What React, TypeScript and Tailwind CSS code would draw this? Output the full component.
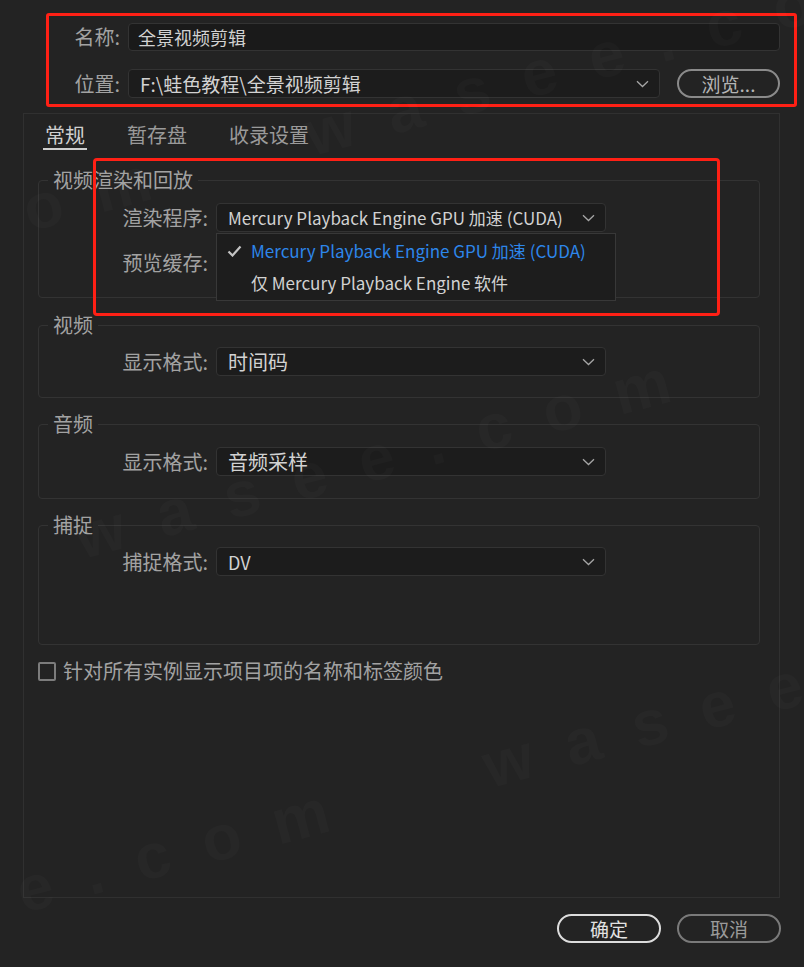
import React from "react"

const chevron = (
  <svg width="13" height="8" viewBox="0 0 13 8" fill="none">
    <path d="M1 1.3l5.5 5.2L12 1.3" stroke="#a6a6a6" strokeWidth="1.3" />
  </svg>
)

function Select({ value, className = "" }: { value: React.ReactNode; className?: string }) {
  return (
    <div
      className={`flex h-[29px] items-center justify-between rounded-[4px] border border-[#333333] bg-[#1c1c1c] pl-[11px] pr-[10px] text-[#d2d2d2] ${className}`}
    >
      <span className="truncate">{value}</span>
      {chevron}
    </div>
  )
}

function Row({ label, children }: { label: string; children: React.ReactNode }) {
  return (
    <div className="flex items-center gap-[8px]">
      <span className="w-[169px] text-right text-[#a2a2a2]">{label}</span>
      {children}
    </div>
  )
}

function Group({ title, className = "", children }: { title: string; className?: string; children: React.ReactNode }) {
  return (
    <fieldset className={`ml-[14px] mr-[19px] rounded-[4px] border border-[#333333] ${className}`}>
      <legend className="ml-[9px] px-[5px] leading-[24px] text-[#a2a2a2]">{title}</legend>
      {children}
    </fieldset>
  )
}

// faint diagonal site watermark
function Watermark({ left, top }: { left: number; top: number }) {
  return (
    <div
      className="pointer-events-none absolute origin-left rotate-[-15deg] whitespace-nowrap font-['Liberation_Sans',sans-serif] text-[64px] font-bold leading-none tracking-[34px] text-white/[0.02]"
      style={{ left, top }}
    >
      {[0, 1, 2, 3].map((i) => (
        <span key={i} className="mr-[128px] inline-block">
          wasee.com
        </span>
      ))}
    </div>
  )
}

export default function App() {
  return (
    <div className="relative h-[967px] w-[804px] overflow-hidden bg-[#232323] font-['Noto_Sans_CJK_SC','Noto_Sans',sans-serif] text-[20px] leading-[26px]">
      {/* name / location */}
      <div className="pl-[46px] pr-[7px] pt-[13px]">
        <div className="flex h-[94px] flex-col gap-[18px] rounded-[3px] border-[3px] border-[#ff2015] pr-[14px] pt-[7px]">
          <div className="flex items-center gap-[8px]">
            <span className="w-[71px] text-right text-[#a2a2a2]">名称:</span>
            <div className="flex h-[28px] flex-1 items-center rounded-[4px] border border-[#333333] bg-[#1a1a1a] pl-[9px] text-[18px] text-[#d2d2d2]">
              全景视频剪辑
            </div>
          </div>
          <div className="flex items-center gap-[8px]">
            <span className="w-[71px] text-right text-[#a2a2a2]">位置:</span>
            <Select value="F:\蛙色教程\全景视频剪辑" className="w-[532px] text-[19px]" />
            <button className="ml-[9px] h-[29px] flex-1 rounded-full border-2 border-[#8a8a8a] text-[19px] leading-[24px] text-[#b4b4b4]">
              浏览...
            </button>
          </div>
        </div>
      </div>

      {/* main panel */}
      <div className="ml-[23px] mr-[24px] mt-[6px] flex h-[785px] flex-col border border-[#303030]">
        <div className="ml-[19px] flex gap-[38px] pt-[8px]">
          <span className="border-b-2 border-[#cfcfcf] px-[2px] text-[#d0d0d0]">常规</span>
          <span className="px-[2px] text-[#9a9a9a]">暂存盘</span>
          <span className="px-[2px] text-[#9a9a9a]">收录设置</span>
        </div>

        <Group title="视频渲染和回放" className="mt-[18px] pb-[20px] pt-[11px]">
          <div className="flex flex-col gap-[16px]">
            <Row label="渲染程序:">
              <div className="relative w-[390px]">
                <Select value="Mercury Playback Engine GPU 加速 (CUDA)" className="text-[17px]" />
                <div className="absolute left-0 top-[30px] z-10 w-[400px] border border-[#383838] bg-[#1d1d1d] py-[1px] text-[17px]">
                  <div className="flex h-[32px] items-center text-[#2d86ea]">
                    <span className="flex w-[34px] justify-center pl-[1px]">
                      <svg width="15" height="12" viewBox="0 0 15 12" fill="none">
                        <path d="M1.5 6.5l4 4L13.5 1.5" stroke="#c4c4c4" strokeWidth="2.2" />
                      </svg>
                    </span>
                    Mercury Playback Engine GPU 加速 (CUDA)
                  </div>
                  <div className="flex h-[32px] items-center pl-[34px] text-[#d2d2d2]">仅 Mercury Playback Engine 软件</div>
                </div>
              </div>
            </Row>
            <Row label="预览缓存:">
              <Select value="" className="w-[390px]" />
            </Row>
          </div>
        </Group>

        <Group title="视频" className="mt-[15px] pb-[21px] pt-[10px]">
          <Row label="显示格式:">
            <Select value="时间码" className="w-[390px]" />
          </Row>
        </Group>

        <Group title="音频" className="mt-[14px] pb-[22px] pt-[11px]">
          <Row label="显示格式:">
            <Select value="音频采样" className="w-[390px]" />
          </Row>
        </Group>

        <Group title="捕捉" className="mt-[14px] pb-[68px] pt-[10px]">
          <Row label="捕捉格式:">
            <Select value="DV" className="w-[390px] text-[18px]" />
          </Row>
        </Group>

        <label className="ml-[14px] mt-[13px] flex items-center gap-[7px] text-[#a2a2a2]">
          <span className="h-[19px] w-[18px] rounded-[2px] border-2 border-[#7c7c7c]" />
          针对所有实例显示项目项的名称和标签颜色
        </label>
      </div>

      {/* footer buttons */}
      <div className="mt-[16px] flex justify-end gap-[16px] pr-[23px] text-[19px]">
        <button className="h-[29px] w-[104px] rounded-full border-2 border-[#dcdcdc] leading-[24px] text-[#e2e2e2]">确定</button>
        <button className="h-[29px] w-[104px] rounded-full border-2 border-[#7a7a7a] leading-[24px] text-[#9a9a9a]">取消</button>
      </div>

      {/* annotation box */}
      <div className="pointer-events-none absolute left-[93px] top-[158px] h-[158px] w-[627px] rounded-[4px] border-[3px] border-[#ff2015]" />

      <Watermark left={-443} top={304} />
      <Watermark left={-673} top={707} />
      <Watermark left={-265} top={936} />
    </div>
  )
}
